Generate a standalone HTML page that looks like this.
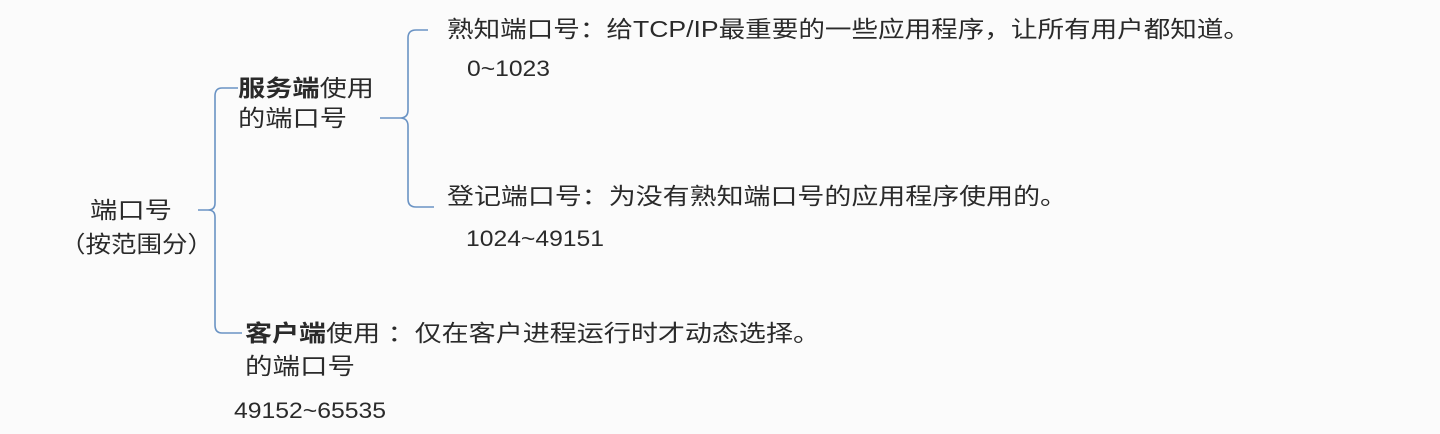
<!DOCTYPE html>
<html><head><meta charset="utf-8"><style>
html,body{margin:0;padding:0;background:#fbfbfb;}
svg{display:block}
text{font-family:"Liberation Sans","Noto Sans CJK SC",sans-serif;fill:#2a2a2a;}
.c{font-size:23px}
.n{font-size:22px}
</style></head><body>
<svg width="1440" height="434" viewBox="0 0 1440 434" xmlns="http://www.w3.org/2000/svg">
<rect width="1440" height="434" fill="#fbfbfb"/>
<g fill="none" stroke="#6a93c4" stroke-width="1.6">
<path d="M238 88 H222 Q215 88 215 96 V203 Q215 210 208 210 H198 M208 210 Q215 210 215 217 V325 Q215 333 222 333 H242"/>
<path d="M428 30 H416 Q408 30 408 38 V110 Q408 118 400 118 H380 M400 118 Q408 118 408 126 V199 Q408 207 416 207 H434"/>
</g>
<text class="c" x="90" y="218" textLength="82" lengthAdjust="spacingAndGlyphs">端口号</text>
<text class="c" x="60" y="252" textLength="153" lengthAdjust="spacingAndGlyphs">（按范围分）</text>
<text class="c" x="238" y="96" textLength="136" lengthAdjust="spacingAndGlyphs"><tspan font-weight="bold">服务端</tspan>使用</text>
<text class="c" x="238" y="126" textLength="109" lengthAdjust="spacingAndGlyphs">的端口号</text>
<text class="c" x="447" y="37" textLength="803" lengthAdjust="spacingAndGlyphs">熟知端口号：给TCP/IP最重要的一些应用程序，让所有用户都知道。</text>
<text class="n" x="467" y="76" textLength="83" lengthAdjust="spacingAndGlyphs">0~1023</text>
<text class="c" x="447" y="204" textLength="620" lengthAdjust="spacingAndGlyphs">登记端口号：为没有熟知端口号的应用程序使用的。</text>
<text class="n" x="466" y="246" textLength="138" lengthAdjust="spacingAndGlyphs">1024~49151</text>
<text class="c" x="245" y="341" textLength="575" lengthAdjust="spacingAndGlyphs"><tspan font-weight="bold">客户端</tspan>使用 ：仅在客户进程运行时才动态选择。</text>
<text class="c" x="245" y="374" textLength="110" lengthAdjust="spacingAndGlyphs">的端口号</text>
<text class="n" x="234" y="418" textLength="152" lengthAdjust="spacingAndGlyphs">49152~65535</text>
</svg>
</body></html>
